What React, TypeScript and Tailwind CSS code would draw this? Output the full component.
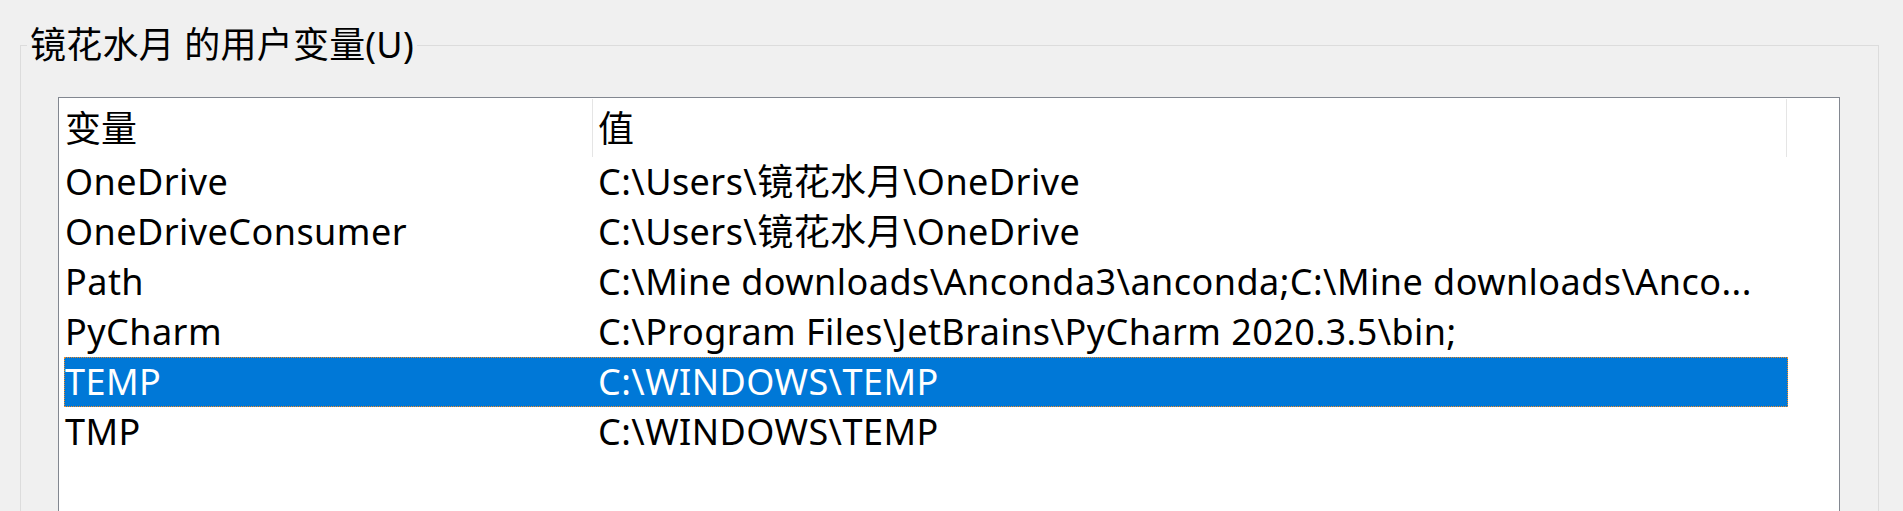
const rows = [
  { name: "OneDrive", value: "C:\\Users\\镜花水月\\OneDrive" },
  { name: "OneDriveConsumer", value: "C:\\Users\\镜花水月\\OneDrive" },
  {
    name: "Path",
    value: "C:\\Mine downloads\\Anconda3\\anconda;C:\\Mine downloads\\Anco...",
  },
  { name: "PyCharm", value: "C:\\Program Files\\JetBrains\\PyCharm 2020.3.5\\bin;" },
  { name: "TEMP", value: "C:\\WINDOWS\\TEMP", selected: true },
  { name: "TMP", value: "C:\\WINDOWS\\TEMP" },
];

const App = () => {
  return (
    <div
      className="h-[511px] w-[1903px] overflow-hidden bg-[#f0f0f0] pt-[20px] text-[36px] text-black"
      style={{ fontFamily: '"Noto Sans", "Noto Sans CJK SC", sans-serif' }}
    >
      {/* 用户变量 group box */}
      <fieldset className="ml-[20px] mr-[24px] border border-[#dcdcdc] px-0">
        <legend className="ml-[6px] px-[3px] leading-[50px] tracking-[0.2px]">镜花水月 的用户变量(U)</legend>

        <div className="mt-[27px] ml-[37px] h-[420px] w-[1782px] border border-[#828790] bg-white">
          {/* header */}
          <div className="flex h-[59px] pl-[5px] pt-[6px] leading-[50px]">
            <div className="w-[528px] pl-[1px]">变量</div>
            <div className="mt-[-5px] h-[58px] w-px bg-[#e5e5e5]" />
            <div className="w-[1193px] pl-[5px]">值</div>
            <div className="mt-[-5px] h-[58px] w-px bg-[#e5e5e5]" />
          </div>

          {/* rows */}
          <div className="pl-[5px]">
            {rows.map((r) => (
              <div
                key={r.name}
                className={`flex h-[50px] w-[1724px] items-center whitespace-nowrap leading-[50px] tracking-[0.45px] ${
                  r.selected
                    ? "bg-[#0078d7] text-white outline outline-1 outline-dotted -outline-offset-1 outline-[#f08a24]"
                    : ""
                }`}
              >
                <div className="w-[534px] pl-[1px]">{r.name}</div>
                <div className="flex-1 overflow-hidden">{r.value}</div>
              </div>
            ))}
          </div>
        </div>
      </fieldset>
    </div>
  );
};

export default App;
